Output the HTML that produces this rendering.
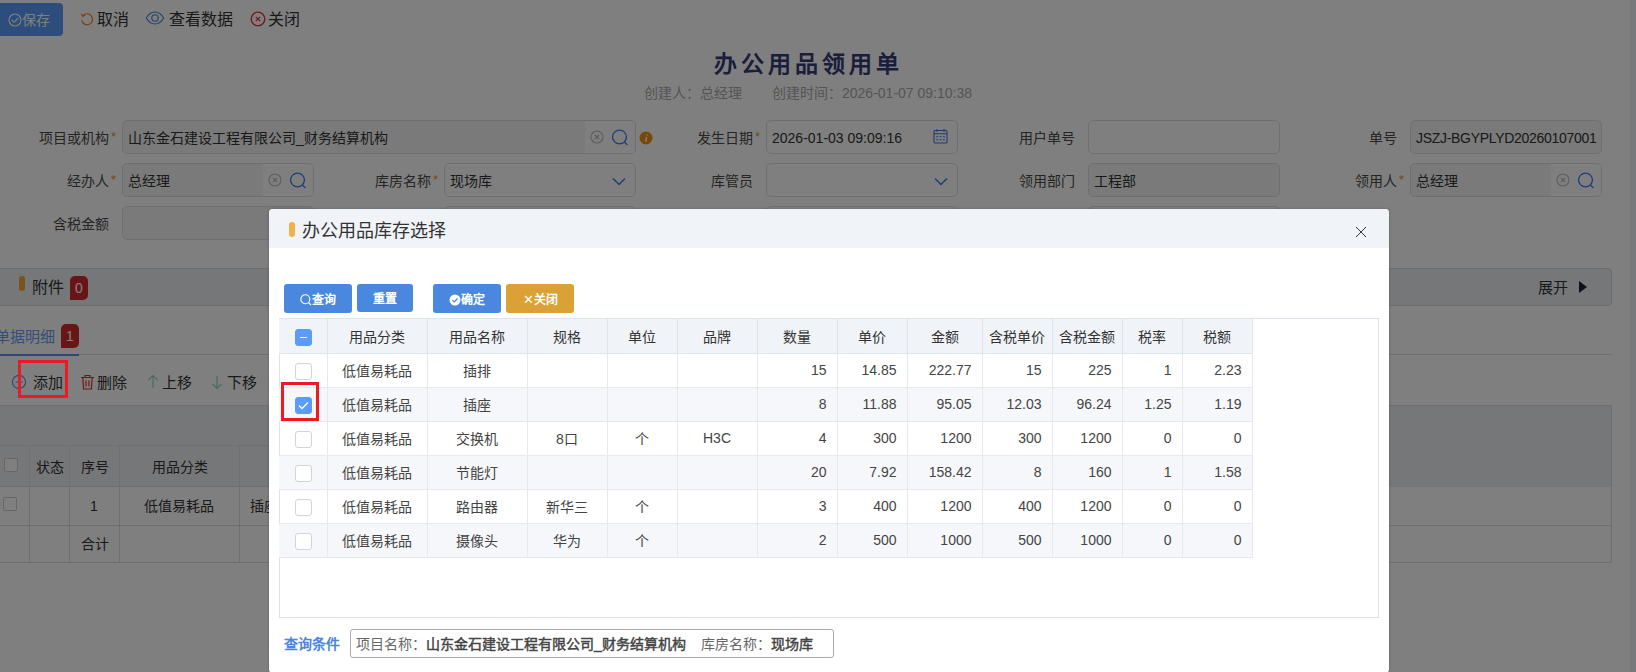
<!DOCTYPE html><html lang="zh-CN"><head><meta charset="utf-8"><style>
*{box-sizing:border-box;margin:0;padding:0}
html,body{width:1636px;height:672px;overflow:hidden;background:#fff;font-family:"Liberation Sans",sans-serif;color:#333}
.a{position:absolute}
.t16{position:absolute;font-size:16px;line-height:20px;white-space:nowrap}
.t14{position:absolute;font-size:14px;line-height:18px;white-space:nowrap}
.lbl{position:absolute;font-size:14px;line-height:36px;height:34px;color:#4a4a4a;text-align:right;white-space:nowrap}
.req{position:absolute;color:#f08c1e;font-size:13px;line-height:14px}
.inp{position:absolute;height:34px;border:1px solid #dcdfe6;border-radius:5px;background:#f4f5f6;font-size:14px;line-height:32px;padding:1px 0 0 5px;color:#333;white-space:nowrap;overflow:hidden}
.ico{position:absolute;top:0;right:0;height:32px;background:#fff}
#mask{position:absolute;left:0;top:0;width:1636px;height:672px;background:rgba(0,0,0,.5)}
#modal{position:absolute;left:269px;top:209px;width:1120px;height:464px;background:#fff;border-radius:4px;overflow:hidden;box-shadow:0 0 3px rgba(0,0,0,.25)}
.mbtn{position:absolute;top:75px;height:29px;border-radius:3px;color:#fff;font-size:12px;line-height:30px;padding-top:1px;font-weight:bold;text-align:center;white-space:nowrap}
table.g{position:absolute;border-collapse:collapse;table-layout:fixed}
.g td{height:34px;border:1px solid #e6e9f0;font-size:14px;color:#444;text-align:center;white-space:nowrap;padding:0;overflow:hidden}
.g td.r{text-align:right;padding-right:10px}
.g tr.h td{background:#f0f3f8;border-color:#dfe3ea;color:#333}
.g tr.s td{background:#f6f7fa}
.cb{display:inline-block;width:17px;height:17px;border:1px solid #d0d4db;border-radius:3px;background:#fff;vertical-align:middle;position:relative;top:1px}
.redbox{position:absolute;border:3px solid #ee1a22}
</style></head><body><div id="page">
<div class="a" style="left:-6px;top:3px;width:69px;height:33px;background:#5a9cf8;border-radius:4px"></div>
<svg class="a" style="left:8px;top:13px" width="14" height="14" viewBox="0 0 14 14"><circle cx="7" cy="7" r="6" fill="none" stroke="#fff" stroke-width="1.1"/><path d="M3.6 7l2.4 2.3 4.3-4.3" fill="none" stroke="#fff" stroke-width="1.1"/></svg>
<div class="t14" style="left:22px;top:10.5px;color:#fff">保存</div>
<svg class="a" style="left:80px;top:12px" width="14" height="14" viewBox="0 0 14 14"><path d="M2.6 4A5.5 5.5 0 1 1 1.6 8.2" fill="none" stroke="#f07c1e" stroke-width="1.15"/><path d="M1.2 1.8l1.5 2.4 2.6-.9" fill="none" stroke="#f07c1e" stroke-width="1.15"/></svg>
<div class="t16" style="left:97px;top:10px;color:#333">取消</div>
<svg class="a" style="left:145px;top:10px" width="20" height="16" viewBox="0 0 20 16"><path d="M1.3 8C4 3.5 7 2 10 2s6 1.5 8.7 6C16 12.5 13 14 10 14S4 12.5 1.3 8z" fill="none" stroke="#3c82dc" stroke-width="1.1"/><circle cx="10" cy="8" r="3.2" fill="none" stroke="#3c82dc" stroke-width="1.1"/></svg>
<div class="t16" style="left:169px;top:10px;color:#333">查看数据</div>
<svg class="a" style="left:250px;top:11px" width="16" height="16" viewBox="0 0 16 16"><circle cx="8" cy="8" r="6.8" fill="none" stroke="#e03030" stroke-width="1.3"/><path d="M5.8 5.8l4.4 4.4M10.2 5.8l-4.4 4.4" stroke="#e03030" stroke-width="1.2"/></svg>
<div class="t16" style="left:268px;top:10px;color:#333">关闭</div>

<div class="a" style="left:0;width:1617px;top:49px;text-align:center;font-size:23px;line-height:30px;font-weight:bold;letter-spacing:4px;color:#363d74">办公用品领用单</div>
<div class="t14" style="left:644px;top:84px;color:#aaa">创建人：总经理</div>
<div class="t14" style="left:772px;top:84px;color:#aaa">创建时间：2026-01-07 09:10:38</div>

<div class="lbl" style="left:-91px;width:200px;top:120px">项目或机构</div>
<div class="req" style="left:111px;top:130px">*</div>
<div class="inp" style="left:122px;top:120px;width:514px">山东金石建设工程有限公司_财务结算机构<div class="ico" style="width:50px"></div><svg class="a" style="right:31px;top:9px" width="14" height="14" viewBox="0 0 14 14"><circle cx="7" cy="7" r="6" fill="none" stroke="#bbb" stroke-width="1.1"/><path d="M5 5l4 4M9 5l-4 4" stroke="#bbb" stroke-width="1.1"/></svg><svg class="a" style="right:5px;top:8px" width="18" height="18" viewBox="0 0 18 18"><circle cx="7.5" cy="8" r="6.9" fill="none" stroke="#3a78e8" stroke-width="1.3"/><path d="M12.4 13l3 3" stroke="#3a78e8" stroke-width="1.3"/></svg></div>
<svg class="a" style="left:639px;top:131px" width="14" height="14" viewBox="0 0 14 14"><circle cx="7" cy="7" r="6.5" fill="#f0900a"/><path d="M7.6 3.2h1.2l-.3 1.3H7.3zM6.8 6h1.6l-1 4.8h-1.5z" fill="#fff"/></svg>
<div class="lbl" style="left:553px;width:200px;top:120px">发生日期</div>
<div class="req" style="left:755px;top:130px">*</div>
<div class="inp" style="background:#fff;left:766px;top:120px;width:192px">2026-01-03 09:09:16<svg class="a" style="right:9px;top:7px" width="15" height="16" viewBox="0 0 15 16"><rect x="1" y="2.5" width="13" height="12.5" rx="1" fill="none" stroke="#3a78e8" stroke-width="1.1"/><path d="M1 5.8h13M4 1v3M11 1v3" stroke="#3a78e8" stroke-width="1.1"/><path d="M3.2 8.8h2M6.5 8.8h2M9.8 8.8h2M3.2 11.8h2M6.5 11.8h2M9.8 11.8h2" stroke="#3a78e8" stroke-width="1.1"/></svg></div>
<div class="lbl" style="left:875px;width:200px;top:120px">用户单号</div>
<div class="inp" style="background:#fff;left:1088px;top:120px;width:192px"></div>
<div class="lbl" style="left:1197px;width:200px;top:120px">单号</div>
<div class="inp" style="left:1410px;top:120px;width:192px"><span style="letter-spacing:-0.3px">JSZJ-BGYPLYD20260107001</span></div>
<div class="lbl" style="left:-91px;width:200px;top:163px">经办人</div>
<div class="req" style="left:111px;top:173px">*</div>
<div class="inp" style="left:122px;top:163px;width:192px">总经理<div class="ico" style="width:50px"></div><svg class="a" style="right:31px;top:9px" width="14" height="14" viewBox="0 0 14 14"><circle cx="7" cy="7" r="6" fill="none" stroke="#bbb" stroke-width="1.1"/><path d="M5 5l4 4M9 5l-4 4" stroke="#bbb" stroke-width="1.1"/></svg><svg class="a" style="right:5px;top:8px" width="18" height="18" viewBox="0 0 18 18"><circle cx="7.5" cy="8" r="6.9" fill="none" stroke="#3a78e8" stroke-width="1.3"/><path d="M12.4 13l3 3" stroke="#3a78e8" stroke-width="1.3"/></svg></div>
<div class="lbl" style="left:231px;width:200px;top:163px">库房名称</div>
<div class="req" style="left:433px;top:173px">*</div>
<div class="inp" style="background:#fff;left:444px;top:163px;width:192px">现场库<svg class="a" style="right:9px;top:13px" width="14" height="9" viewBox="0 0 14 9"><path d="M1 1.5l6 6 6-6" fill="none" stroke="#3a78e8" stroke-width="1.5"/></svg></div>
<div class="lbl" style="left:553px;width:200px;top:163px">库管员</div>
<div class="inp" style="background:#fff;left:766px;top:163px;width:192px"><svg class="a" style="right:9px;top:13px" width="14" height="9" viewBox="0 0 14 9"><path d="M1 1.5l6 6 6-6" fill="none" stroke="#3a78e8" stroke-width="1.5"/></svg></div>
<div class="lbl" style="left:875px;width:200px;top:163px">领用部门</div>
<div class="inp" style="left:1088px;top:163px;width:192px">工程部</div>
<div class="lbl" style="left:1197px;width:200px;top:163px">领用人</div>
<div class="req" style="left:1399px;top:173px">*</div>
<div class="inp" style="left:1410px;top:163px;width:192px">总经理<div class="ico" style="width:50px"></div><svg class="a" style="right:31px;top:9px" width="14" height="14" viewBox="0 0 14 14"><circle cx="7" cy="7" r="6" fill="none" stroke="#bbb" stroke-width="1.1"/><path d="M5 5l4 4M9 5l-4 4" stroke="#bbb" stroke-width="1.1"/></svg><svg class="a" style="right:5px;top:8px" width="18" height="18" viewBox="0 0 18 18"><circle cx="7.5" cy="8" r="6.9" fill="none" stroke="#3a78e8" stroke-width="1.3"/><path d="M12.4 13l3 3" stroke="#3a78e8" stroke-width="1.3"/></svg></div>
<div class="lbl" style="left:-91px;width:200px;top:206px">含税金额</div>
<div class="inp" style="left:122px;top:206px;width:192px"></div>
<div class="inp" style="background:#fff;left:444px;top:206px;width:192px"></div>
<div class="inp" style="background:#fff;left:766px;top:206px;width:192px"></div>
<div class="inp" style="background:#fff;left:1088px;top:206px;width:192px"></div>
<div class="a" style="left:-10px;top:268px;width:1622px;height:38px;background:#edeff2;border:1px solid #d5d8dd;border-radius:4px"></div>
<div class="a" style="left:19px;top:276px;width:6px;height:15px;background:#f0a838;border-radius:3px"></div>
<div class="t16" style="left:32px;top:278px;color:#333">附件</div>
<div class="a" style="left:70px;top:276px;width:18px;height:24px;background:#d42a2a;border-radius:5px 5px 5px 0;color:#fff;font-size:14px;line-height:24px;text-align:center">0</div>
<div class="t14" style="left:1538px;top:279px;color:#333;font-size:15px">展开</div>
<svg class="a" style="left:1578px;top:280px" width="10" height="14" viewBox="0 0 10 14"><path d="M1 1l8 6-8 6z" fill="#1a2535"/></svg>
<div class="t16" style="left:-5px;top:327px;color:#6a9cf0;font-size:15px">单据明细</div>
<div class="a" style="left:61px;top:324px;width:18px;height:24px;background:#d42a2a;border-radius:5px 5px 5px 0;color:#fff;font-size:14px;line-height:24px;text-align:center">1</div>
<div class="a" style="left:0;top:354px;width:1612px;height:1px;background:#dcdfe4"></div>
<div class="a" style="left:0;top:354px;width:79px;height:2px;background:#5a90ea"></div>
<svg class="a" style="left:11px;top:374px" width="16" height="16" viewBox="0 0 16 16"><circle cx="8" cy="8" r="6.6" fill="none" stroke="#5c8ae6" stroke-width="1.1"/><path d="M4.5 8h7M8 4.5v7" stroke="#5c8ae6" stroke-width="1.1"/></svg>
<div class="t16" style="left:33px;top:373px;color:#333;font-size:15px">添加</div>
<svg class="a" style="left:80px;top:374px" width="15" height="16" viewBox="0 0 15 16"><path d="M1 3.5h13M5 3.5V1.5h5v2M2.8 3.5l.8 11.5h7.8l.8-11.5M6 6.5v6M9 6.5v6" fill="none" stroke="#d43030" stroke-width="1.15"/></svg>
<div class="t16" style="left:97px;top:373px;color:#333;font-size:15px">删除</div>
<svg class="a" style="left:147px;top:374px" width="12" height="15" viewBox="0 0 12 15"><path d="M6 14V1.5M1.5 6L6 1.5 10.5 6" fill="none" stroke="#8fd6bb" stroke-width="1.15"/></svg>
<div class="t16" style="left:162px;top:373px;color:#333;font-size:15px">上移</div>
<svg class="a" style="left:211px;top:375px" width="12" height="15" viewBox="0 0 12 15"><path d="M6 1v12.5M1.5 9L6 13.5 10.5 9" fill="none" stroke="#8fd6bb" stroke-width="1.15"/></svg>
<div class="t16" style="left:227px;top:373px;color:#333;font-size:15px">下移</div>
<div class="a" style="left:-10px;top:405px;width:1622px;height:158px;border:1px solid #dcdfe4"></div>
<div class="a" style="left:-10px;top:406px;width:1621px;height:81px;background:#eceef1"></div>
<div class="a" style="left:-10px;top:445px;width:300px;height:1px;background:#dcdfe4"></div>
<div class="a" style="left:-10px;top:486px;width:300px;height:1px;background:#dcdfe4"></div>
<div class="a" style="left:-10px;top:525px;width:1621px;height:1px;background:#dcdfe4"></div>
<div class="a" style="left:29px;top:445px;width:1px;height:117px;background:#dcdfe4"></div>
<div class="a" style="left:69px;top:445px;width:1px;height:117px;background:#dcdfe4"></div>
<div class="a" style="left:119px;top:445px;width:1px;height:117px;background:#dcdfe4"></div>
<div class="a" style="left:239px;top:445px;width:1px;height:117px;background:#dcdfe4"></div>
<div class="a" style="left:4px;top:458px;width:14px;height:14px;border:1px solid #ccc;border-radius:2px;background:#fff"></div>
<div class="a" style="left:3px;top:497px;width:14px;height:14px;border:1px solid #ccc;border-radius:2px;background:#fff"></div>
<div class="t14" style="left:36px;top:458px;color:#333">状态</div>
<div class="t14" style="left:81px;top:458px;color:#333">序号</div>
<div class="t14" style="left:152px;top:458px;color:#333">用品分类</div>
<div class="t14" style="left:90px;top:497px;color:#333">1</div>
<div class="t14" style="left:144px;top:497px;color:#333">低值易耗品</div>
<div class="t14" style="left:250px;top:497px;color:#333">插座</div>
<div class="t14" style="left:81px;top:535px;color:#333">合计</div>
<div class="a" style="left:1630px;top:0;width:6px;height:672px;background:#f0f2f5"></div>
</div><div id="mask"></div><div id="modal">
<div class="a" style="left:0;top:0;width:1120px;height:39px;background:#f0f3f8"></div>
<div class="a" style="left:20px;top:13px;width:6px;height:15px;background:#f2b144;border-radius:3px"></div>
<div class="a" style="left:33px;top:10px;font-size:18px;line-height:24px;color:#333;white-space:nowrap">办公用品库存选择</div>
<svg class="a" style="left:1086px;top:17px" width="12" height="12" viewBox="0 0 12 12"><path d="M1 1l10 10M11 1L1 11" stroke="#333" stroke-width="1"/></svg>
<div class="mbtn" style="left:15px;width:68px;background:#4a88e0"><svg style="vertical-align:-2px" width="12" height="12" viewBox="0 0 12 12"><circle cx="5.3" cy="5.3" r="4.5" fill="none" stroke="#fff" stroke-width="1.1"/><path d="M8.5 8.5l2.5 2.5" stroke="#fff" stroke-width="1.1"/></svg>查询</div>
<div class="mbtn" style="left:88px;width:56px;height:28px;line-height:28px;background:#4a88e0">重置</div>
<div class="mbtn" style="left:164px;width:68px;background:#4a88e0"><svg style="vertical-align:-2px" width="12" height="12" viewBox="0 0 12 12"><circle cx="6" cy="6" r="5.5" fill="#fff"/><path d="M3.5 6.2l1.8 1.7 3.2-3.4" fill="none" stroke="#4a88e0" stroke-width="1.2"/></svg>确定</div>
<div class="mbtn" style="left:237px;width:68px;background:#dba137"><span style="font-weight:normal;font-size:13px">✕</span>关闭</div>
<div class="a" style="left:10px;top:109px;width:1100px;height:300px;border:1px solid #dfe2e8"></div>
<table class="g" style="left:10px;top:110px;width:973px"><colgroup><col style="width:48px"><col style="width:100px"><col style="width:100px"><col style="width:80px"><col style="width:70px"><col style="width:80px"><col style="width:80px"><col style="width:70px"><col style="width:75px"><col style="width:70px"><col style="width:70px"><col style="width:60px"><col style="width:70px"></colgroup><tr class="h"><td style="border-left:0;border-top:0;padding-left:2px"><span class="cb" style="background:#5b9cf8;border-color:#5b9cf8"><span style="position:absolute;left:4px;top:7px;width:7px;height:1.5px;background:#fff"></span></span></td><td style="border-top:0">用品分类</td><td style="border-top:0">用品名称</td><td style="border-top:0">规格</td><td style="border-top:0">单位</td><td style="border-top:0">品牌</td><td style="border-top:0">数量</td><td style="border-top:0">单价</td><td style="border-top:0">金额</td><td style="border-top:0">含税单价</td><td style="border-top:0">含税金额</td><td style="border-top:0">税率</td><td style="border-top:0">税额</td></tr><tr><td style="border-left:0;padding-left:2px"><span class="cb"></span></td><td>低值易耗品</td><td>插排</td><td></td><td></td><td></td><td class="r">15</td><td class="r">14.85</td><td class="r">222.77</td><td class="r">15</td><td class="r">225</td><td class="r">1</td><td class="r">2.23</td></tr><tr class="s"><td style="border-left:0;padding-left:2px"><span class="cb" style="background:#5b9cf8;border-color:#5b9cf8"><svg style="position:absolute;left:2px;top:3px" width="11" height="9" viewBox="0 0 11 9"><path d="M1 4.5l3 3 6-6" fill="none" stroke="#fff" stroke-width="1.3"/></svg></span></td><td>低值易耗品</td><td>插座</td><td></td><td></td><td></td><td class="r">8</td><td class="r">11.88</td><td class="r">95.05</td><td class="r">12.03</td><td class="r">96.24</td><td class="r">1.25</td><td class="r">1.19</td></tr><tr><td style="border-left:0;padding-left:2px"><span class="cb"></span></td><td>低值易耗品</td><td>交换机</td><td>8口</td><td>个</td><td>H3C</td><td class="r">4</td><td class="r">300</td><td class="r">1200</td><td class="r">300</td><td class="r">1200</td><td class="r">0</td><td class="r">0</td></tr><tr class="s"><td style="border-left:0;padding-left:2px"><span class="cb"></span></td><td>低值易耗品</td><td>节能灯</td><td></td><td></td><td></td><td class="r">20</td><td class="r">7.92</td><td class="r">158.42</td><td class="r">8</td><td class="r">160</td><td class="r">1</td><td class="r">1.58</td></tr><tr><td style="border-left:0;padding-left:2px"><span class="cb"></span></td><td>低值易耗品</td><td>路由器</td><td>新华三</td><td>个</td><td></td><td class="r">3</td><td class="r">400</td><td class="r">1200</td><td class="r">400</td><td class="r">1200</td><td class="r">0</td><td class="r">0</td></tr><tr class="s"><td style="border-left:0;padding-left:2px"><span class="cb"></span></td><td>低值易耗品</td><td>摄像头</td><td>华为</td><td>个</td><td></td><td class="r">2</td><td class="r">500</td><td class="r">1000</td><td class="r">500</td><td class="r">1000</td><td class="r">0</td><td class="r">0</td></tr></table>
<div class="a" style="left:15px;top:426px;font-size:14px;line-height:18px;font-weight:bold;color:#4a86e0;white-space:nowrap">查询条件</div>
<div class="a" style="left:81px;top:420px;width:484px;height:29px;border:1px solid #a9abb0;border-radius:3px;font-size:14px;line-height:29px;padding-left:5px;color:#666;white-space:nowrap">项目名称：<b style="color:#444;font-weight:normal;-webkit-text-stroke:0.45px #444">山东金石建设工程有限公司_财务结算机构</b><span style="display:inline-block;width:15px"></span>库房名称：<b style="color:#444;font-weight:normal;-webkit-text-stroke:0.45px #444">现场库</b></div>
</div>
<div class="redbox" style="left:18px;top:360px;width:50px;height:38px"></div>
<div class="redbox" style="left:281px;top:382px;width:38px;height:39px"></div>
</body></html>
